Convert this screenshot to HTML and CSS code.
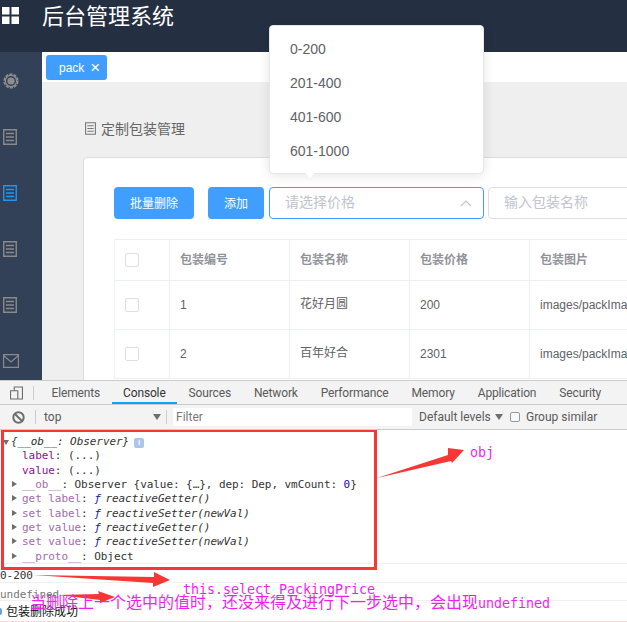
FILE: index.html
```html
<!DOCTYPE html>
<html lang="zh">
<head>
<meta charset="utf-8">
<title>后台管理系统</title>
<link rel="stylesheet" href="styles.css">
</head>
<body>
<svg class="defs" width="0" height="0">
  <symbol id="doc" viewBox="0 0 14 16"><path d="M.75.75h12.5v14.5H.75zM3 4.5h8M3 8h8M3 11.5h8" fill="none" stroke="currentColor" stroke-width="1.4"/></symbol>
</svg>
<div class="app">
  <header class="topbar">
    <svg class="logo" viewBox="0 0 17 17"><path d="M0 0h7.5v7.5H0zM9.5 0H17v7.5H9.5zM0 9.5h7.5V17H0zM9.5 9.5H17V17H9.5z" fill="#fff"/></svg>
    <h1 class="brand">后台管理系统</h1>
  </header>
  <div class="body">
    <nav class="side">
      <svg class="nav-icon gear" viewBox="0 0 16 16"><circle cx="8" cy="8" r="3.6" fill="#8d8d8d"/><circle cx="8" cy="8" r="5.6" fill="none" stroke="#8d8d8d" stroke-width="1.2"/><circle cx="8" cy="8" r="6.8" fill="none" stroke="#8d8d8d" stroke-width="1.6" stroke-dasharray="3.2 1.1"/></svg>
      <svg class="nav-icon"><use href="#doc"/></svg>
      <svg class="nav-icon active"><use href="#doc"/></svg>
      <svg class="nav-icon"><use href="#doc"/></svg>
      <svg class="nav-icon"><use href="#doc"/></svg>
      <svg class="nav-icon mail" viewBox="0 0 16 14"><path d="M.6.6h14.8v12.8H.6zM.6 1.5 8 8l7.4-6.5" fill="none" stroke="currentColor" stroke-width="1.2"/></svg>
    </nav>
    <main class="main">
      <div class="tabs"><span class="tag">pack<span class="tag-x">×</span></span></div>
      <div class="content">
        <div class="crumb"><svg class="crumb-icon"><use href="#doc"/></svg>定制包装管理</div>
        <section class="card">
          <div class="filters">
            <button class="btn">批量删除</button>
            <button class="btn btn-add">添加</button>
            <div class="field field-open"><span>请选择价格</span>
              <svg class="chev" viewBox="0 0 12 7"><path d="M1 6l5-5 5 5" fill="none" stroke="#c0c4cc" stroke-width="1.2"/></svg></div>
            <div class="field field-name"><span>输入包装名称</span></div>
          </div>
          <div class="table">
            <div class="row row-head">
              <div class="cell cell-check"><i class="check"></i></div><div class="cell zh">包装编号</div><div class="cell zh">包装名称</div><div class="cell zh">包装价格</div><div class="cell zh">包装图片</div>
            </div>
            <div class="row">
              <div class="cell cell-check"><i class="check"></i></div><div class="cell">1</div><div class="cell zh">花好月圆</div><div class="cell">200</div><div class="cell">images/packImages/1.jpg</div>
            </div>
            <div class="row">
              <div class="cell cell-check"><i class="check"></i></div><div class="cell">2</div><div class="cell zh">百年好合</div><div class="cell">2301</div><div class="cell">images/packImages/2.jpg</div>
            </div>
          </div>
        </section>
      </div>
    </main>
  </div>
  <ul class="dropdown">
    <li>0-200</li><li>201-400</li><li>401-600</li><li>601-1000</li>
  </ul>
</div>
<div class="devtools">
  <div class="dt-tabs">
    <svg class="dt-dock" viewBox="0 0 14 14"><path d="M.6 4.6h7.8v8.8H.6zM4.6 4.6V.6h8.8v12.8H8.4" fill="none" stroke="#6e6e6e" stroke-width="1.2"/></svg>
    <i class="dt-sep"></i>
    <span class="dt-tab">Elements</span><span class="dt-tab dt-on">Console</span><span class="dt-tab">Sources</span><span class="dt-tab">Network</span><span class="dt-tab">Performance</span><span class="dt-tab">Memory</span><span class="dt-tab">Application</span><span class="dt-tab">Security</span>
  </div>
  <div class="dt-bar">
    <svg class="dt-clear" viewBox="0 0 13 13"><circle cx="6.5" cy="6.5" r="5.2" fill="none" stroke="#6e6e6e" stroke-width="2"/><path d="M3 3l7 7" stroke="#6e6e6e" stroke-width="2"/></svg>
    <i class="dt-sep"></i>
    <span class="dt-ctx">top<i class="tri"></i></span>
    <i class="dt-sep dt-sep-ctx"></i>
    <span class="dt-filter">Filter</span>
    <span class="dt-levels">Default levels<i class="tri"></i></span>
    <i class="dt-box"></i><span class="dt-group">Group similar</span>
  </div>
  <div class="console">
    <div class="msg msg-obj">
      <div class="ln"><i class="arr arr-down"></i><em>{__ob__: Observer}</em><b class="info">i</b></div>
      <div class="ln in"><span class="key">label</span>: (...)</div>
      <div class="ln in"><span class="key">value</span>: (...)</div>
      <div class="ln in"><i class="arr"></i><span class="dim">__ob__</span>: Observer {value: {…}, dep: Dep, vmCount: <span class="num">0</span>}</div>
      <div class="ln in"><i class="arr"></i><span class="dim">get label</span>: <em class="fn">ƒ</em> <em>reactiveGetter()</em></div>
      <div class="ln in"><i class="arr"></i><span class="dim">set label</span>: <em class="fn">ƒ</em> <em>reactiveSetter(newVal)</em></div>
      <div class="ln in"><i class="arr"></i><span class="dim">get value</span>: <em class="fn">ƒ</em> <em>reactiveGetter()</em></div>
      <div class="ln in"><i class="arr"></i><span class="dim">set value</span>: <em class="fn">ƒ</em> <em>reactiveSetter(newVal)</em></div>
      <div class="ln in"><i class="arr"></i><span class="dim">__proto__</span>: Object</div>
    </div>
    <div class="msg msg-a">0-200</div>
    <div class="msg msg-b">undefined</div>
    <div class="msg msg-c"><i class="toast-dot"></i>包装删除成功</div>
    <div class="msg-err"></div>
    <div class="redbox"></div>
    <svg class="marks" viewBox="0 0 627 192" width="627" height="192">
      <g fill="#f73636" transform="translate(0 -430)">
        <path d="M377 478 448 455 448 448 464 450 452 463 451 461z"/>
        <path d="M33 575 154 577 154 572 170 580 153 587 153 583z"/>
        <path d="M58 595 99 594 98 591 115 597 100 603 100 600z"/>
      </g>
    </svg>
    <span class="note note-obj">obj</span>
    <span class="note note-this">this.select_PackingPrice</span>
    <span class="note note-long">当删除上一个选中的值时，还没来得及进行下一步选中，会出现<span class="latin">undefined</span></span>
  </div>
</div>
</body>
</html>
```
FILE: styles.css
```css
* { box-sizing: border-box; }
html, body { margin: 0; padding: 0; }
body {
  width: 627px;
  height: 622px;
  overflow: hidden;
  background: #fff;
  font-family: "Liberation Sans", "Noto Sans CJK SC", sans-serif;
}
.defs { position: absolute; }
.app { position: relative; height: 380px; overflow: hidden; }

.topbar { display: flex; align-items: flex-start; height: 52px; background: #242f42; }
.logo { width: 17px; height: 17px; margin: 7px 0 0 2px; }
.brand { margin: 1px 0 0 23px; color: #fff; font-size: 22px; line-height: 32px; font-weight: 400; }

.body { display: flex; height: 328px; }
.side {
  display: flex; flex-direction: column; align-items: flex-start;
  width: 42px; flex: none; background: #324157; color: #8a8a8a;
  padding: 21px 0 0 3px;
}
.nav-icon { display: block; width: 14px; height: 16px; margin-bottom: 40px; color: #8a8a8a; }
.nav-icon.gear { width: 16px; height: 16px; }
.nav-icon.active { color: #1e96f5; }
.nav-icon.mail { width: 16px; height: 14px; margin: 1px 0 0; }

.main { flex: 1; min-width: 0; display: flex; flex-direction: column; background: #efefef; }
.tabs { height: 30px; flex: none; background: #fff; padding: 3px 0 0 4px; }
.tag {
  display: inline-flex; align-items: center; height: 25px; width: 61px;
  padding-left: 13px; background: #409eff; border-radius: 3px;
  color: #fff; font-size: 12px;
}
.tag-x { margin-left: 6px; font-size: 17px; line-height: 20px; font-weight: 400; }
.content { flex: 1; padding: 38px 0 0 41px; overflow: hidden; }
.crumb { display: flex; align-items: center; height: 16px; color: #666; font-size: 14px; }
.crumb-icon { width: 11px; height: 13px; margin: 0 5px 0 2px; color: #777; }
.card {
  width: 640px; height: 260px; margin-top: 21px;
  background: #fff; border: 1px solid #ddd; border-radius: 4px 0 0 0;
  padding: 29px 0 0 30px;
}
.filters { display: flex; align-items: stretch; height: 32px; }
.btn {
  width: 80px; border: 0; border-radius: 4px; background: #409eff; color: #fff;
  font: 12px "Liberation Sans", "Noto Sans CJK SC", sans-serif; margin-right: 14px; padding: 0 0 2px;
}
.btn-add { width: 56px; margin-right: 5px; }
.field {
  display: flex; align-items: center; justify-content: space-between;
  width: 215px; border: 1px solid #dcdfe6; border-radius: 4px;
  padding: 0 11px 0 15px; font-size: 14px; color: #c0c4cc; flex: none;
}
.field span { padding-bottom: 5px; }
.field-open { border-color: #409eff; }
.field-name { margin-left: 4px; width: 160px; }
.chev { width: 12px; height: 7px; }

.table { width: 536px; margin-top: 20px; border-top: 1px solid #ebeef5; border-left: 1px solid #ebeef5; }
.row { display: grid; grid-template-columns: 55px 120px 120px 120px 120px; height: 49px; border-bottom: 1px solid #ebeef5; color: #606266; font-size: 12px; }
.row-head { height: 41px; color: #909399; font-weight: 700; }
.cell { display: flex; align-items: center; padding-left: 10px; border-right: 1px solid #ebeef5; white-space: nowrap; overflow: hidden; }
.cell.zh { padding-bottom: 5px; }
.row-head .cell.zh { padding-bottom: 3px; }
.check { display: block; width: 14px; height: 14px; border: 1px solid #dcdfe6; border-radius: 2px; background: #fff; }

.dropdown {
  position: absolute; left: 269px; top: 25px; width: 215px; height: 149px;
  margin: 0; padding: 6px 0; list-style: none;
  background: #fff; border: 1px solid #e4e7ed; border-radius: 4px;
  box-shadow: 0 2px 12px rgba(0,0,0,.1);
  color: #606266; font-size: 14px;
}
.dropdown::after {
  content: ""; position: absolute; left: 35px; top: 100%;
  border: 5px solid transparent; border-top-color: #fff; border-bottom: 0;
}
.dropdown li { height: 34px; line-height: 34px; padding-left: 20px; }

.devtools { height: 242px; border-top: 1px solid #ccc; background: #fff; }
.dt-tabs {
  display: flex; align-items: center; height: 24px; background: #f3f3f3;
  border-bottom: 1px solid #ccc; color: #5a5a5a;
  font: 12px Roboto, sans-serif; letter-spacing: -.15px;
}
.dt-dock { width: 13px; height: 14px; margin-left: 10px; }
.dt-sep { width: 1px; height: 14px; background: #ccc; flex: none; margin: 0 6px 0 10px; }
.dt-tab { display: flex; align-items: center; height: 23px; padding: 0 11.5px; }
.dt-on { color: #333; box-shadow: inset 0 -2px 0 #03a9f4; }
.dt-bar {
  display: flex; align-items: center; height: 25px; background: #f3f3f3;
  border-bottom: 1px solid #ccc; color: #5a5a5a;
  font: 12px Roboto, sans-serif;
}
.dt-clear { width: 13px; height: 13px; margin-left: 12px; }
.dt-ctx { display: flex; align-items: center; justify-content: space-between; width: 117px; margin-left: 2px; }
.dt-sep-ctx { margin: 0 6px 0 5px; }
.tri { width: 0; height: 0; border: 4px solid transparent; border-top: 6px solid #6e6e6e; border-bottom: 0; }
.dt-filter { width: 239px; height: 18px; line-height: 18px; background: #fff; padding-left: 3px; color: #777; margin-right: 7px; }
.dt-levels { display: flex; align-items: center; gap: 4px; width: 91px; }
.dt-box { width: 10px; height: 10px; border: 1px solid #999; border-radius: 2px; background: #f8f8f8; }
.dt-group { margin-left: 6px; }

.console { position: relative; height: 192px; overflow: hidden; font: 11px "DejaVu Sans Mono", monospace; color: #333; }
.msg { border-bottom: 1px solid #f0f0f0; white-space: nowrap; }
.msg-obj { height: 134px; padding-top: 5px; }
.ln { position: relative; height: 14.35px; line-height: 14px; padding-left: 11px; letter-spacing: -.06px; }
.ln.in { padding-left: 22px; }
.ln em { font-style: italic; }
.key { color: #881391; }
.dim { color: #a46bab; }
.num { color: #1c00cf; }
.ln .fn { color: #0d22aa; letter-spacing: -2px; }
.info {
  display: inline-block; width: 10px; height: 10px; margin-left: 5px;
  background: #a9c6ee; border-radius: 2px; color: #fff; font: 700 8px/10px "Liberation Sans", sans-serif; text-align: center;
}
.arr { position: absolute; left: 12px; top: 3px; border: 3.5px solid transparent; border-left: 5px solid #6e6e6e; border-right: 0; }
.arr-down { left: 3px; top: 5px; border: 3px solid transparent; border-top: 5px solid #6e6e6e; border-bottom: 0; }
.msg-a { height: 19px; line-height: 23px; letter-spacing: -.06px; }
.msg-b { height: 18px; line-height: 23px; color: #777; letter-spacing: -.06px; }
.msg-c { display: flex; align-items: center; height: 20px; color: #111; font: 12px/22px "Noto Sans CJK SC", sans-serif; border-bottom: 0; }
.toast-dot { width: 2px; height: 7px; margin-right: 4px; background: #6f9fd8; border-radius: 0 3px 3px 0; }
.msg-err { height: 1px; background: #ffd6d6; }

.redbox { position: absolute; left: 1px; top: -1px; width: 376px; height: 141px; border: 3px solid #f73636; }
.marks { position: absolute; left: 0; top: 0; }
.note { position: absolute; color: #f01ff0; white-space: nowrap; font: 13.3px/16px "DejaVu Sans Mono", monospace; }
.note-obj { left: 470px; top: 15px; }
.note-this { left: 183px; top: 152px; }
.note-long { left: 30px; top: 162px; font: 16px/18px "Noto Sans CJK SC", sans-serif; }
.latin { font: 13.3px/18px "DejaVu Sans Mono", monospace; }
```
